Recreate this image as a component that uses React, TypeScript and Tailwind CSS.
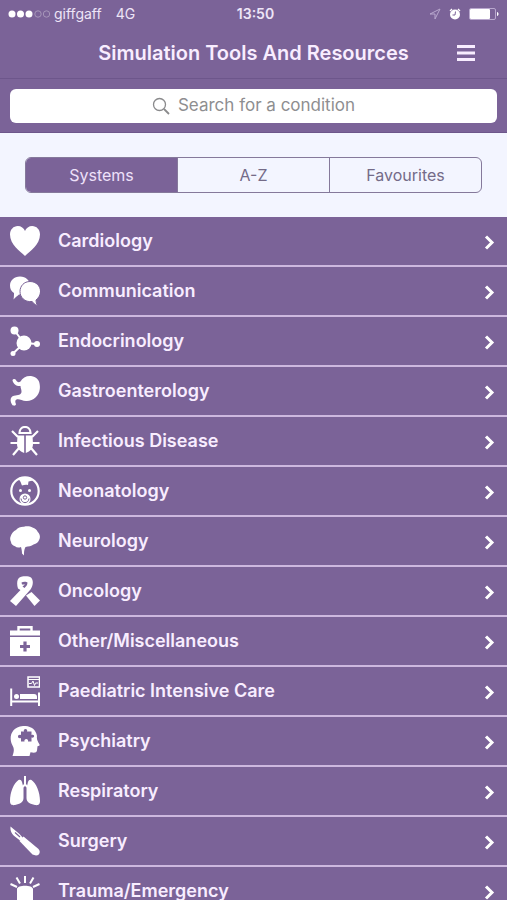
import { useState } from 'react';
import type { ReactNode } from 'react';
import clsx from 'clsx';

interface System {
  name: string;
  icon: ReactNode;
}

const systems: System[] = [
  {
    name: 'Cardiology',
    icon: <path d="M15 30C10 25 0 18.500 0 8.500C0 3.500 3.500 0 7.800 0C11 0 14 2 15 5C16 2 19 0 22.200 0C26.500 0 30 3.500 30 8.500C30 18.500 20 25 15 30Z" />,
  },
  {
    name: 'Communication',
    icon: (
      <>
        <path d="M10 0.500C16 0.500 20 4.500 20 9.500C20 15 16 18.500 9 18.500C7 20 5.500 21.500 3.500 23.500C4 21 4 19 4 17C1 15 0 12.500 0 9.500C0 4.500 4 0.500 10 0.500Z" />
        <path
          d="M20 5.500C26 5.500 30.500 10 30.500 15.500C30.500 19 28.500 22 26 24C26 26 26.500 28 27.500 30C25 28.500 23.500 27 22 25.500C14.500 26.500 10 21 10 15.500C10 10 14 5.500 20 5.500Z"
          stroke="#7b6398"
        />
      </>
    ),
  },
  {
    name: 'Endocrinology',
    icon: (
      <>
        <circle cx="14" cy="17" r="7.500" />
        <circle cx="4.500" cy="4.500" r="4" />
        <circle cx="27" cy="18" r="3" />
        <circle cx="3" cy="27.500" r="2.500" />
        <path d="M4.500 4.500L14 17L27 18M14 17L3 27.500" fill="none" stroke="currentColor" strokeWidth="2" />
      </>
    ),
  },
  {
    name: 'Gastroenterology',
    icon: (
      <path d="M2.500 4.500C2.500 3 5 2.500 6 4C7 6 8.500 7 10.500 5.500C12.500 1.500 17 -0.500 22 0.200C28 1 30.500 6 29.800 13C29 20 23 25.500 16 25C12 24.700 9 22.500 6.500 23.500C4.500 24.500 5.500 27 6 28C6 30 3 30.300 2 28.500C-0.500 24 0.500 20.500 4 19.700C8 19 11.500 19 11.500 15.500C11.500 13.500 10.500 12 10.500 10C6.500 10.500 3.500 8 2.500 4.500Z" />
    ),
  },
  {
    name: 'Infectious Disease',
    icon: (
      <>
        <path d="M9.500 7C9.500 -1 20.500 -1 20.500 7Z" fill="none" stroke="currentColor" strokeWidth="2.200" />
        <path d="M7.500 9.500H14.200V27C9.500 25.500 7 22 7 18ZM15.800 9.500H22.500L23 18C23 22 20.500 25.500 15.800 27Z" />
        <path
          d="M8 11L2 5M22 11L28 5M8 17H0.500M22 17H29.500M9 22L3 29M21 22L27 29"
          fill="none"
          stroke="currentColor"
          strokeWidth="2.200"
        />
      </>
    ),
  },
  {
    name: 'Neonatology',
    icon: (
      <>
        <circle cx="15" cy="15" r="13.700" fill="none" stroke="currentColor" strokeWidth="2.200" />
        <path d="M8 2.500C13 0 19 1 23 4.500L18.500 5.500L18 9C15.500 8.500 14 9 12 9.500C11 8 11 6 10 5Z" />
        <circle cx="10.500" cy="14.500" r="1.500" />
        <circle cx="19.500" cy="14.500" r="1.500" />
        <circle cx="15" cy="23" r="5.500" />
        <g fill="none" stroke="#7b6398">
          <circle cx="15" cy="21.500" r="1.700" />
          <path d="M11 22.500C11.500 28 18.500 28 19 22.500" />
        </g>
      </>
    ),
  },
  {
    name: 'Neurology',
    icon: (
      <path d="M6 4C8 1.500 11 0.500 14 0.700C17 -0.200 20.500 0.300 22.500 1.500C25 2.200 27 4 27.800 6C30 8 30.500 11 29.300 13.500C28.500 16 26.500 18 23.500 18.500C21.500 20 18.500 20.500 15.500 21C14 24 14 26 14 29.500L12 27.500C12 25 11.500 23 11 21C8.500 22 6.500 21.500 5 20.300C2.500 19.500 1.200 18 1 16C-0.200 14 0 11.500 0.800 10C1.500 7.500 3.500 5 6 4Z" />
    ),
  },
  {
    name: 'Oncology',
    icon: (
      <>
        <path d="M16 19.500L21.500 16L30 24.500L24.500 30Z" />
        <path d="M8 12.500C6.500 8 7 3 9.500 1.500C12 -0.200 19 -0.200 21 1.500C23.500 4 23.500 9 20.500 13.500L6 30L0 25L10.500 14Z" />
        <path d="M12 8.500L11.500 6.500C13 5.500 16.500 5.500 17.500 6.500C17.500 9 16 10.500 14.500 12L12.500 10.500L15 8.500Z" fill="#7b6398" />
      </>
    ),
  },
  {
    name: 'Other/Miscellaneous',
    icon: (
      <>
        <path d="M8.500 6V1.200H21.500V6" fill="none" stroke="currentColor" strokeWidth="2.400" />
        <path d="M0 4.500H30V9.500H0ZM0 11H30V30H0Z" />
        <path d="M15 15.500V25.500M10 20.500H20" fill="none" stroke="#7b6398" strokeWidth="3.200" />
      </>
    ),
  },
  {
    name: 'Paediatric Intensive Care',
    icon: (
      <>
        <path d="M18 1H29.500V11H18Z" fill="none" stroke="currentColor" strokeWidth="1.500" />
        <path d="M18 3.500H29M19 7.500H21.500L23 5L24.500 9.500L25.500 7H28" fill="none" stroke="currentColor" />
        <path d="M1.200 12.500V30M29 16.500V30M1.200 25.500H29" fill="none" stroke="currentColor" strokeWidth="2" />
        <circle cx="6.500" cy="20.500" r="2.500" />
        <path d="M10 18H24C26 18 27 19 27 21V23H10Z" />
      </>
    ),
  },
  {
    name: 'Psychiatry',
    icon: (
      <>
        <path d="M13 0C20 -0.500 26 3 27 10C26.500 13 27.500 15 29.500 18.500C30 19.500 29 20 27.500 20.300L27 24.500C26.500 27 24 27 20.500 26.200L19.500 30H2.500C4 25.500 4.500 23 2.500 19.500C-1.500 12 0.500 1.500 13 0Z" />
        <path
          d="M11 5.500H14C12.500 2 18.500 2 17 5.500H21.500V9C25 7.500 25 12.500 21.500 11.500V15.500H18C19 12 13.500 12 14.500 15.500H11V12C7 13.500 7 7.500 11 9Z"
          fill="#7b6398"
        />
      </>
    ),
  },
  {
    name: 'Respiratory',
    icon: (
      <>
        <path d="M12.500 8C12 4.500 10.500 3 8.500 4C4 7 0 16 0 25C0 29 2.500 29.500 5 29C10 28 13.500 26 13.500 22V12Z" />
        <path d="M17.500 8C18 4.500 19.500 3 21.500 4C26 7 30 16 30 25C30 29 27.500 29.500 25 29C20 28 16.500 26 16.500 22V12Z" />
        <path d="M15 0V8.500L12 11.500M15 8.500L18 11.500" fill="none" stroke="currentColor" strokeWidth="2" />
      </>
    ),
  },
  {
    name: 'Surgery',
    icon: (
      <>
        <path d="M0.500 0.500L9.500 8L13.500 12.500L10 14.500L5.500 11C2 8.500 0 5 0.500 0.500Z" />
        <path d="M13.500 10.500L28.500 23C31 26 29.500 29.500 26 29.500L22.500 28.500L9.500 15Z" />
        <path d="M5 6.500L10 11" fill="none" stroke="#7b6398" strokeWidth="1.200" />
      </>
    ),
  },
  {
    name: 'Trauma/Emergency',
    icon: (
      <>
        <path
          d="M15 0V7M6.500 1.500L10 7.500M23.500 1.500L20 7.500M0.500 8L7 11M29.500 8L23 11"
          fill="none"
          stroke="currentColor"
          strokeWidth="2"
        />
        <path d="M7 24V13C7 8.500 23 8.500 23 13V24H26V30H4V24Z" />
      </>
    ),
  },
];

const tabs = ['Systems', 'A-Z', 'Favourites'];

function StatusBar() {
  return (
    <div className="relative flex h-7 items-center justify-between px-2 text-sm text-[#eee5f7]">
      <div className="flex items-center">
        <svg width="43" height="8" viewBox="0 0 43 8" fill="white" aria-hidden="true">
          <circle cx="4" cy="4" r="3.500" />
          <circle cx="12.500" cy="4" r="3.500" />
          <circle cx="21" cy="4" r="3.500" />
          <g fill="none" stroke="#a797ba">
            <circle cx="30" cy="4" r="3.200" />
            <circle cx="38.500" cy="4" r="3.200" />
          </g>
        </svg>
        <span className="ml-[3px]">giffgaff</span>
        <span className="ml-3.5">4G</span>
      </div>
      <span className="absolute left-1/2 -translate-x-1/2 pl-1 font-semibold">13:50</span>
      <div className="flex items-center gap-2">
        <svg width="12" height="12" viewBox="0 0 12 12" fill="none" stroke="#b9a8ce" aria-hidden="true">
          <path d="M11 1L1 6H6V11Z" />
        </svg>
        <svg width="12" height="12" viewBox="0 0 12 12" fill="white" aria-hidden="true">
          <circle cx="6" cy="6.500" r="5" />
          <path d="M1 3L3 1M11 3L9 1" stroke="white" strokeWidth="1.300" />
          <path d="M6.500 3.500L6 7H3.500" fill="none" stroke="#7b6398" />
        </svg>
        <svg width="30" height="12" viewBox="0 0 30 12" fill="white" aria-hidden="true">
          <rect x="0.500" y="0.500" width="26" height="11" rx="1.500" fill="none" stroke="#b9a8ce" />
          <rect x="1" y="1" width="20" height="10" rx="1" />
          <path d="M28 4C30 4.500 30 7.500 28 8Z" />
        </svg>
      </div>
    </div>
  );
}

export default function App() {
  const [activeTab, setActiveTab] = useState('Systems');
  const [query, setQuery] = useState('');

  return (
    <div className="flex h-screen flex-col overflow-hidden bg-[#7b6398] font-['Inter','Liberation_Sans',sans-serif]">
      <header className="border-b border-[#6d568b]">
        <StatusBar />
        <div className="relative flex h-[50px] items-center justify-center">
          <h1 className="text-xl font-semibold text-[#f8edff]">Simulation Tools And Resources</h1>
          <button type="button" aria-label="Menu" className="absolute right-8 text-[#f8edff]">
            <svg width="18" height="16" viewBox="0 0 18 16" fill="currentColor">
              <path d="M0 0H18V3H0ZM0 6.500H18V9.500H0ZM0 13H18V16H0Z" />
            </svg>
          </button>
        </div>
      </header>

      <div className="border-b border-[#6d568b] px-2.5 pt-2.5 pb-[9px]">
        <label className="flex h-[34px] items-center justify-center gap-2 rounded-md bg-white">
          <svg width="18" height="18" viewBox="0 0 18 18" fill="none" stroke="#8a8a8c" aria-hidden="true">
            <circle cx="7.500" cy="7.500" r="6" strokeWidth="1.300" />
            <path d="M12 12L17 17" strokeWidth="1.800" />
          </svg>
          <input
            type="text"
            aria-label="Search for a condition"
            placeholder="Search for a condition"
            value={query}
            onChange={(e) => setQuery(e.target.value)}
            className="field-sizing-content text-[17px] text-gray-700 outline-none placeholder:text-[#8e8e90]"
          />
        </label>
      </div>

      <div className="bg-[#f3f5ff] px-[25px] py-6">
        <div className="flex h-9 divide-x divide-[#85799b] overflow-hidden rounded-md border border-[#85799b]">
          {tabs.map((tab) => (
            <button
              key={tab}
              type="button"
              aria-pressed={activeTab === tab}
              onClick={() => setActiveTab(tab)}
              className={clsx(
                'flex-1 text-base',
                activeTab === tab ? 'bg-[#7b6398] text-[#eee0fa]' : 'text-[#746b88]'
              )}
            >
              {tab}
            </button>
          ))}
        </div>
      </div>

      <ul className="min-h-0 flex-1 overflow-y-auto [scrollbar-width:none]">
        {systems.map((system) => (
          <li key={system.name} className="border-b-2 border-[#cdb8df]">
            <a href="#" className="flex h-12 items-center px-2.5 text-[#f8edff]">
              <svg width="30" height="30" viewBox="0 0 30 30" fill="currentColor" className="text-white" aria-hidden="true">
                {system.icon}
              </svg>
              <span className="ml-[18px] flex-1 text-lg font-semibold">{system.name}</span>
              <svg width="16" height="20" viewBox="0 0 16 20" fill="none" stroke="white" strokeWidth="3" aria-hidden="true">
                <path d="M5 5.500L11 11.500L5 17.500" />
              </svg>
            </a>
          </li>
        ))}
      </ul>
    </div>
  );
}
